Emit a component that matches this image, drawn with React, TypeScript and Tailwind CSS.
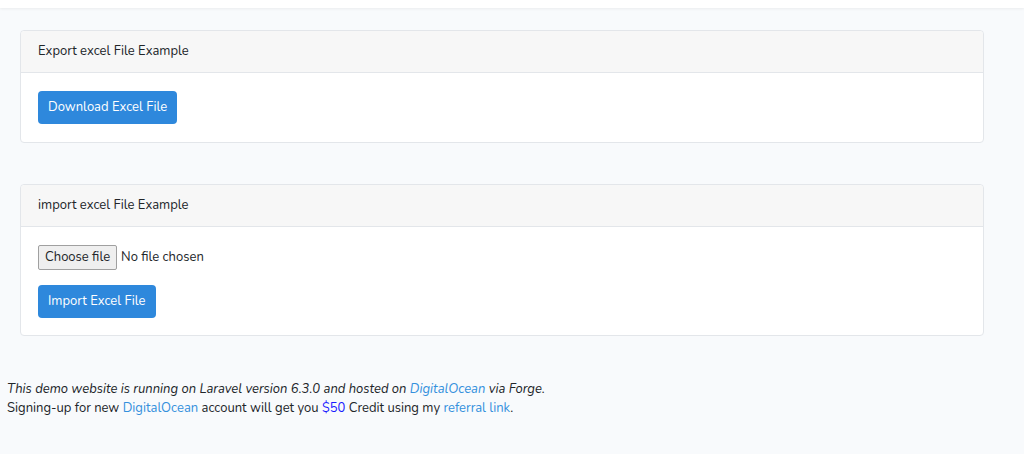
export default function App() {
  return (
    <div className="min-h-[454px] bg-[#f8fafc] text-[#212529] text-[13px]" style={{ fontFamily: "Nunito, Lato, 'Open Sans', sans-serif" }}>
      <div className="h-2 bg-white shadow-[0_1px_3px_rgba(0,0,0,0.06)]" />

      <div className="pt-[22px] pl-5 pr-10">
        <div className="rounded border border-[#e3e6ea] bg-white">
          <div className="h-[42px] flex items-center px-[17px] bg-[#f7f7f7] border-b border-[#e3e6ea] rounded-t">
            Export excel File Example
          </div>
          <div className="px-[17px] pt-[18px] pb-[18px]">
            <button className="h-[33px] px-[10px] rounded bg-[#2e88dc] text-white">Download Excel File</button>
          </div>
        </div>

        <div className="mt-[41px] rounded border border-[#e3e6ea] bg-white">
          <div className="h-[42px] flex items-center px-[17px] bg-[#f7f7f7] border-b border-[#e3e6ea] rounded-t">
            import excel File Example
          </div>
          <div className="px-[17px] pt-[18px] pb-[17px]">
            <div className="flex items-center gap-1 h-[25px]">
              <span className="h-[25px] px-[6px] flex items-center border border-[#a0a0a0] bg-[#efefef] rounded-[2px]">Choose file</span>
              <span>No file chosen</span>
            </div>
            <button className="mt-[15px] h-[33px] px-[10px] rounded bg-[#2e88dc] text-white">Import Excel File</button>
          </div>
        </div>
      </div>

      <div className="mt-[44px] pl-[7px] leading-[19px]">
        <p className="italic">
          This demo website is running on Laravel version 6.3.0 and hosted on <a className="text-[#3490dc]">DigitalOcean</a> via Forge.
        </p>
        <p>
          Signing-up for new <a className="text-[#3490dc]">DigitalOcean</a> account will get you <span className="text-[#1a1aff]">$50</span> Credit using my <a className="text-[#3490dc]">referral link</a>.
        </p>
      </div>
    </div>
  );
}
